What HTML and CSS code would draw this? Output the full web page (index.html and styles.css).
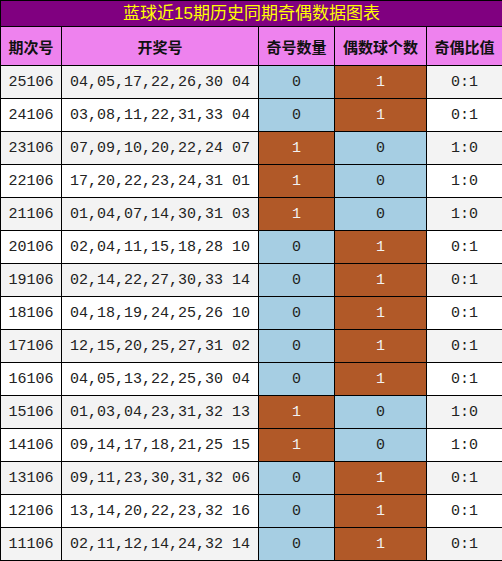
FILE: index.html
```html
<!DOCTYPE html>
<html>
<head>
<meta charset="utf-8">
<link rel="stylesheet" href="styles.css">
</head>
<body>
<table class="grid">
<colgroup><col class="c1"><col class="c2"><col class="c3"><col class="c4"><col class="c5"></colgroup>
<tr class="title"><td colspan="5">蓝球近15期历史同期奇偶数据图表</td></tr>
<tr class="head"><th>期次号</th><th>开奖号</th><th>奇号数量</th><th>偶数球个数</th><th>奇偶比值</th></tr>
<tr class="g"><td>25106</td><td>04,05,17,22,26,30 04</td><td class="b">0</td><td class="r">1</td><td>0:1</td></tr>
<tr><td>24106</td><td>03,08,11,22,31,33 04</td><td class="b">0</td><td class="r">1</td><td>0:1</td></tr>
<tr class="g"><td>23106</td><td>07,09,10,20,22,24 07</td><td class="r">1</td><td class="b">0</td><td>1:0</td></tr>
<tr><td>22106</td><td>17,20,22,23,24,31 01</td><td class="r">1</td><td class="b">0</td><td>1:0</td></tr>
<tr class="g"><td>21106</td><td>01,04,07,14,30,31 03</td><td class="r">1</td><td class="b">0</td><td>1:0</td></tr>
<tr><td>20106</td><td>02,04,11,15,18,28 10</td><td class="b">0</td><td class="r">1</td><td>0:1</td></tr>
<tr class="g"><td>19106</td><td>02,14,22,27,30,33 14</td><td class="b">0</td><td class="r">1</td><td>0:1</td></tr>
<tr><td>18106</td><td>04,18,19,24,25,26 10</td><td class="b">0</td><td class="r">1</td><td>0:1</td></tr>
<tr class="g"><td>17106</td><td>12,15,20,25,27,31 02</td><td class="b">0</td><td class="r">1</td><td>0:1</td></tr>
<tr><td>16106</td><td>04,05,13,22,25,30 04</td><td class="b">0</td><td class="r">1</td><td>0:1</td></tr>
<tr class="g"><td>15106</td><td>01,03,04,23,31,32 13</td><td class="r">1</td><td class="b">0</td><td>1:0</td></tr>
<tr><td>14106</td><td>09,14,17,18,21,25 15</td><td class="r">1</td><td class="b">0</td><td>1:0</td></tr>
<tr class="g"><td>13106</td><td>09,11,23,30,31,32 06</td><td class="b">0</td><td class="r">1</td><td>0:1</td></tr>
<tr><td>12106</td><td>13,14,20,22,23,32 16</td><td class="b">0</td><td class="r">1</td><td>0:1</td></tr>
<tr class="g"><td>11106</td><td>02,11,12,14,24,32 14</td><td class="b">0</td><td class="r">1</td><td>0:1</td></tr>
</table>
</body>
</html>
```
FILE: styles.css
```css
html, body { margin: 0; padding: 0; background: #fff; }
.grid {
  border-collapse: collapse;
  table-layout: fixed;
  width: 502px;
  font-family: "Liberation Mono", "Noto Sans CJK SC", monospace;
  font-size: 15px;
  color: #222;
}
.c1 { width: 61px; }
.c2 { width: 197px; }
.c3 { width: 76px; }
.c4 { width: 92px; }
.c5 { width: 76px; }
.grid td, .grid th {
  border: 1px solid #000;
  padding: 0;
  text-align: center;
  vertical-align: middle;
  white-space: nowrap;
  overflow: hidden;
}
.grid tr td { height: 32px; background: #fff; }
.grid tr.g td { background: #f3f3f3; }
.grid tr td.b { background: #a6cee3; color: #222; }
.grid tr td.r { background: #b15928; color: #f2f2f2; }
.grid tr.title td {
  height: 25px;
  background: #800080;
  color: #ffff00;
  font-family: "Liberation Sans", "Noto Sans CJK SC", sans-serif;
  font-size: 17px;
  line-height: 25px;
}
.grid tr.head th {
  height: 38px;
  background: #ee82ee;
  color: #111;
  font-family: "Liberation Sans", "Noto Sans CJK SC", sans-serif;
  font-size: 15px;
  font-weight: bold;
}
```
